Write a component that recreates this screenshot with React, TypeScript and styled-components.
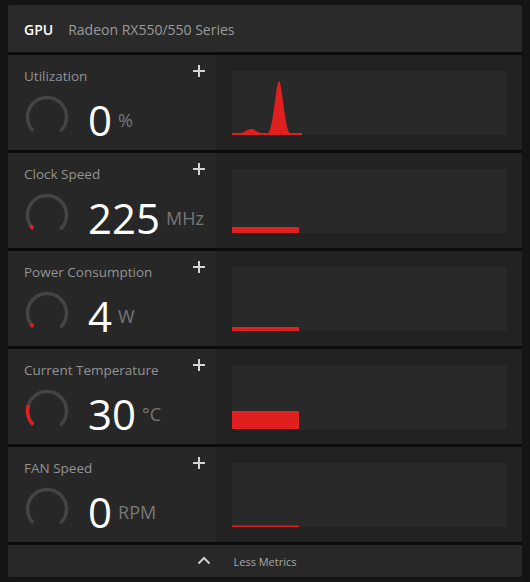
import React from "react";
import styled, { createGlobalStyle } from "styled-components";

const Global = createGlobalStyle`
  html, body { margin: 0; padding: 0; background: #141414; }
  body { font-family: "Open Sans", "Noto Sans", sans-serif; }
`;

const Page = styled.div`
  padding: 5px 8px;
`;

const Panel = styled.div`
  width: 514px;
  background: #0c0c0c;
  display: flex;
  flex-direction: column;
  gap: 3px;
  border-radius: 2px;
  overflow: hidden;
`;

const Header = styled.div`
  height: 47px;
  box-sizing: border-box;
  padding: 2px 0 0 16px;
  background: #2a2a2a;
  display: flex;
  align-items: center;
  gap: 15px;
  font-size: 14px;
`;

const Title = styled.span`
  color: #ffffff;
  font-weight: 600;
`;

const Sub = styled.span`
  color: #9a9a9a;
`;

const Row = styled.div`
  height: 95px;
  display: grid;
  grid-template-columns: 208px 1fr;
`;

const LeftCell = styled.div`
  background: #272727;
  padding: 10px 11px 0 16px;
  display: flex;
  flex-direction: column;
`;

const TopLine = styled.div`
  display: flex;
  justify-content: space-between;
  align-items: flex-start;
`;

const Label = styled.span`
  margin-top: 1px;
  line-height: 20px;
  font-size: 13.5px;
  color: #939393;
`;

const Metric = styled.div`
  display: flex;
  align-items: flex-start;
  margin-top: 8px;
`;

const ValueGroup = styled.div`
  display: flex;
  align-items: center;
  gap: 6px;
  margin: 4px 0 0 18px;
`;

const Value = styled.span`
  font-size: 42px;
  line-height: 44px;
  color: #ffffff;
`;

const Unit = styled.span`
  font-size: 18px;
  line-height: 20px;
  color: #777777;
`;

const RightCell = styled.div`
  background: #222222;
  padding: 16px 15px 15px 16px;
  display: flex;
`;

const Chart = styled.div`
  flex: 1;
  background: #292929;
  display: flex;
`;

const ChartSvg = styled.svg`
  width: 100%;
  height: 100%;
  display: block;
`;

const Footer = styled.div`
  height: 32px;
  background: #282828;
  display: grid;
  grid-template-columns: 1fr auto 1fr;
  align-items: center;
`;

const Chevron = styled.svg`
  justify-self: end;
  margin-right: 22px;
  margin-top: -1px;
`;

const FooterText = styled.span`
  font-size: 11px;
  color: #a8a8a8;
`;

const R = 19.5;
const C = 2 * Math.PI * R;
const ARC = C * 0.75;

function Gauge({ frac }: { frac: number }) {
  return (
    <svg width="46" height="46" viewBox="0 0 46 46">
      <g transform="rotate(135 23 23)">
        <circle
          cx="23"
          cy="23"
          r={R}
          fill="none"
          stroke="#444444"
          strokeWidth="3.5"
          strokeDasharray={`${ARC} ${C}`}
        />
        {frac > 0 && (
          <circle
            cx="23"
            cy="23"
            r={R}
            fill="none"
            stroke="#e0201f"
            strokeWidth="3.5"
            strokeDasharray={`${ARC * frac} ${C}`}
          />
        )}
      </g>
    </svg>
  );
}

function Plus() {
  return (
    <svg width="12" height="12" viewBox="0 0 12 12">
      <path d="M6 0 V12 M0 6 H12" stroke="#d6d6d6" strokeWidth="2" />
    </svg>
  );
}

type RowData = {
  label: string;
  value: string;
  unit: string;
  gauge: number;
  chart: React.ReactNode;
};

const RED = "#e0201f";

const rows: RowData[] = [
  {
    label: "Utilization",
    value: "0",
    unit: "%",
    gauge: 0,
    chart: (
      <path
        d="M0,64 L0,62 L8,62 C13,62 15,58 19,58 C23,58 25,62 30,62 L36,62 C41,61 44,10 47,10 C50,10 53,61 58,62 L70,62 L70,64 Z"
        fill={RED}
      />
    ),
  },
  {
    label: "Clock Speed",
    value: "225",
    unit: "MHz",
    gauge: 0.05,
    chart: <rect x="0" y="58" width="67" height="6" fill={RED} />,
  },
  {
    label: "Power Consumption",
    value: "4",
    unit: "W",
    gauge: 0.04,
    chart: <rect x="0" y="60" width="67" height="4" fill={RED} />,
  },
  {
    label: "Current Temperature",
    value: "30",
    unit: "°C",
    gauge: 0.23,
    chart: <rect x="0" y="46" width="67" height="18" fill={RED} />,
  },
  {
    label: "FAN Speed",
    value: "0",
    unit: "RPM",
    gauge: 0,
    chart: <rect x="0" y="62.5" width="67" height="1.5" fill={RED} />,
  },
];

export default function App() {
  return (
    <>
      <Global />
      <Page>
        <Panel>
          <Header>
            <Title>GPU</Title>
            <Sub>Radeon RX550/550 Series</Sub>
          </Header>
          {rows.map((r) => (
            <Row key={r.label}>
              <LeftCell>
                <TopLine>
                  <Label>{r.label}</Label>
                  <Plus />
                </TopLine>
                <Metric>
                  <Gauge frac={r.gauge} />
                  <ValueGroup>
                    <Value>{r.value}</Value>
                    <Unit>{r.unit}</Unit>
                  </ValueGroup>
                </Metric>
              </LeftCell>
              <RightCell>
                <Chart>
                  <ChartSvg viewBox="0 0 275 64" preserveAspectRatio="none">
                    {r.chart}
                  </ChartSvg>
                </Chart>
              </RightCell>
            </Row>
          ))}
          <Footer>
            <Chevron width="14" height="9" viewBox="0 0 14 9">
              <path d="M1.5 7.5 L7 2 L12.5 7.5" fill="none" stroke="#cccccc" strokeWidth="2" />
            </Chevron>
            <FooterText>Less Metrics</FooterText>
            <span />
          </Footer>
        </Panel>
      </Page>
    </>
  );
}
